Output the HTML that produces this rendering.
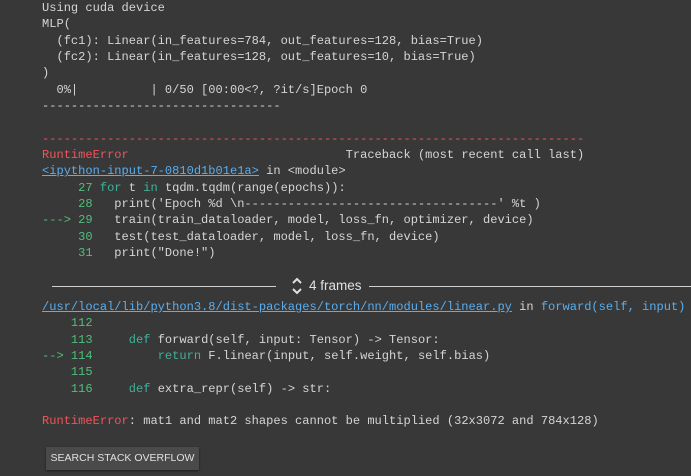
<!DOCTYPE html>
<html><head><meta charset="utf-8"><style>
html,body{margin:0;padding:0;background:#383838;width:691px;height:476px;overflow:hidden}
pre{position:absolute;left:42px;margin:0;font-family:"Liberation Mono",monospace;font-size:12.05px;line-height:16.35px;color:#d5d5d5;white-space:pre}
.r{color:#f0545c}.g{color:#4fbf7c}.k{color:#3fb29a}.l{color:#58aef0;text-decoration:underline}.c{color:#58aef0}
.fr{position:absolute;top:277px;left:52px;width:639px;height:18px;font-family:"Liberation Sans",sans-serif;font-size:13.5px;color:#e0e0e0}
.ln{position:absolute;top:9px;height:1px;background:#d0d0d0}
.btn{position:absolute;left:46px;top:447px;width:153px;height:23px;background:#4a4a4a;box-shadow:0 1px 2px rgba(0,0,0,.5);color:#e0e0e0;font-family:"Liberation Sans",sans-serif;font-size:10.5px;line-height:23px;text-align:center}
</style></head><body>
<pre style="top:0">Using cuda device
MLP(
  (fc1): Linear(in_features=784, out_features=128, bias=True)
  (fc2): Linear(in_features=128, out_features=10, bias=True)
)
  0%|          | 0/50 [00:00&lt;?, ?it/s]Epoch 0
---------------------------------

<span class="r">---------------------------------------------------------------------------</span>
<span class="r">RuntimeError</span>                              Traceback (most recent call last)
<span class="l">&lt;ipython-input-7-0810d1b01e1a&gt;</span> in &lt;module&gt;
<span class="g">     27</span> <span class="k">for</span> t <span class="k">in</span> tqdm.tqdm(range(epochs)):
<span class="g">     28</span>   print('Epoch %d \n-----------------------------------' %t )
<span class="g">---&gt; 29</span>   train(train_dataloader, model, loss_fn, optimizer, device)
<span class="g">     30</span>   test(test_dataloader, model, loss_fn, device)
<span class="g">     31</span>   print("Done!")</pre>
<div class="fr"><div class="ln" style="left:0;width:224px"></div>
<svg style="position:absolute;left:239px;top:0" width="12" height="18" viewBox="0 0 12 18"><path d="M2 6 L6 2 L10 6 M2 12 L6 16 L10 12" stroke="#e0e0e0" stroke-width="2" fill="none"/></svg>
<span style="position:absolute;left:257px;top:0;line-height:18px">4 frames</span>
<div class="ln" style="left:317px;width:322px"></div></div>
<pre style="top:299px"><span class="l">/usr/local/lib/python3.8/dist-packages/torch/nn/modules/linear.py</span> in <span class="c">forward(self, input)</span>
<span class="g">    112</span>
<span class="g">    113</span>     <span class="k">def</span> forward(self, input: Tensor) -&gt; Tensor:
<span class="g">--&gt; 114</span>         <span class="k">return</span> F.linear(input, self.weight, self.bias)
<span class="g">    115</span>
<span class="g">    116</span>     <span class="k">def</span> extra_repr(self) -&gt; str:

<span class="r">RuntimeError</span>: mat1 and mat2 shapes cannot be multiplied (32x3072 and 784x128)</pre>
<div class="btn">SEARCH STACK OVERFLOW</div>
</body></html>
